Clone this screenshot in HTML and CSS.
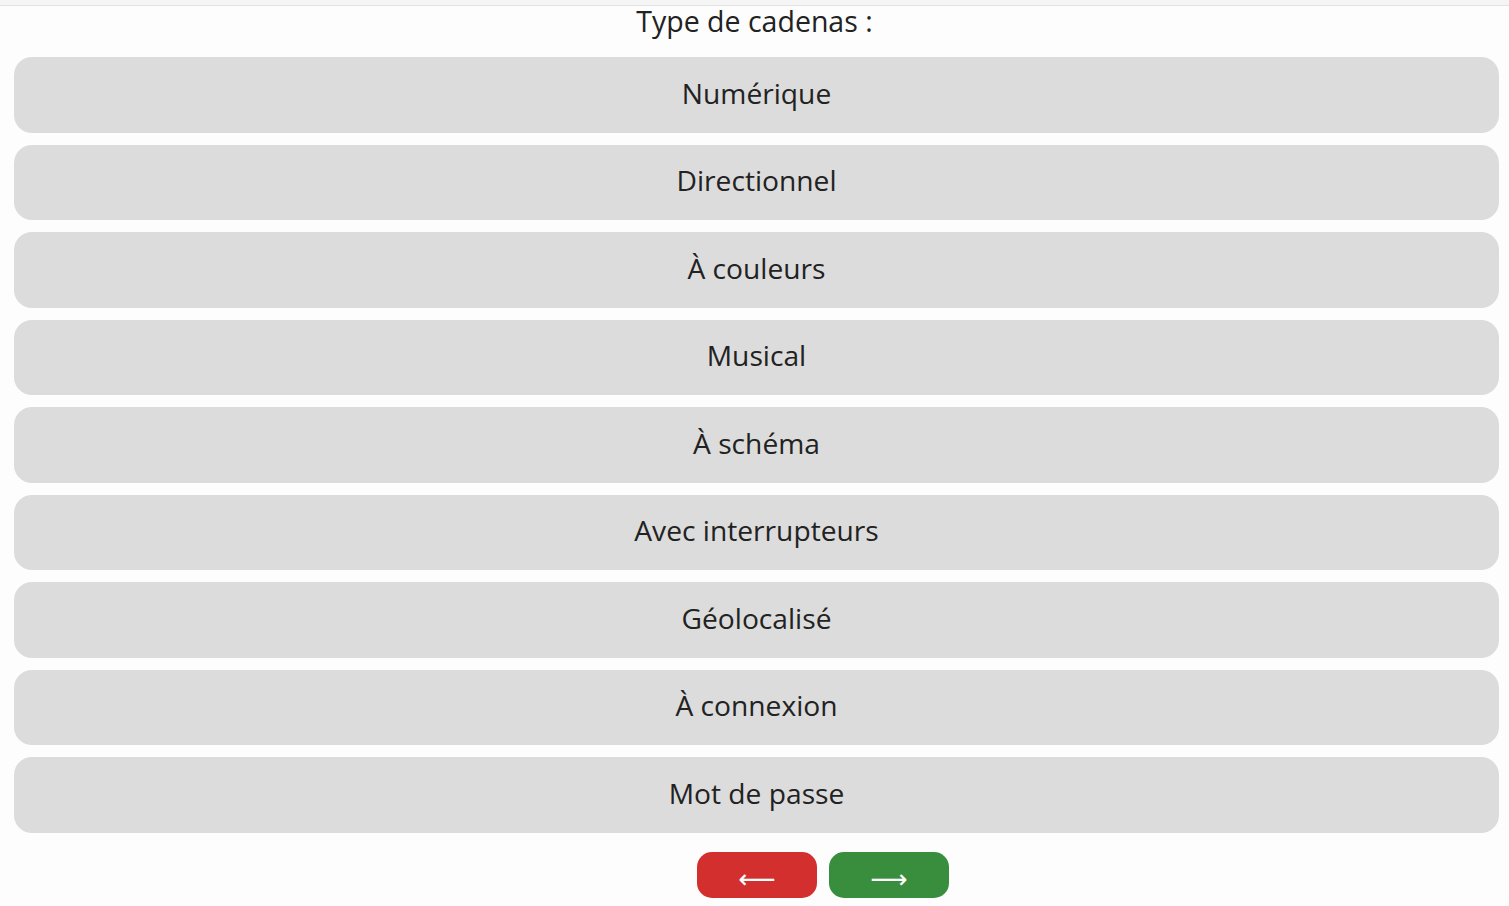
FILE: index.html
```html
<!DOCTYPE html>
<html lang="fr">
<head>
<meta charset="utf-8">
<title>Type de cadenas</title>
<link rel="stylesheet" href="styles.css">
</head>
<body>
<div class="topbar"></div>
<main class="page">
  <h1 class="title">Type de cadenas :</h1>
  <div class="options">
    <button class="option">Numérique</button>
    <button class="option">Directionnel</button>
    <button class="option">À couleurs</button>
    <button class="option">Musical</button>
    <button class="option">À schéma</button>
    <button class="option">Avec interrupteurs</button>
    <button class="option">Géolocalisé</button>
    <button class="option">À connexion</button>
    <button class="option">Mot de passe</button>
  </div>
  <nav class="nav">
    <button class="nav-btn prev">&#x27F5;</button>
    <button class="nav-btn next">&#x27F6;</button>
  </nav>
</main>
</body>
</html>
```
FILE: styles.css
```css
html, body {
  margin: 0;
  padding: 0;
  background: #fdfdfd;
  font-family: "Open Sans", "Liberation Sans", sans-serif;
  color: #222;
}
.topbar {
  height: 5px;
  background: #f5f5f5;
  border-bottom: 1px solid #e2e2e2;
}
.page {
  display: flex;
  flex-direction: column;
  align-items: stretch;
}
.title {
  margin: 0;
  height: 51px;
  font-size: 28.5px;
  font-weight: 400;
  line-height: 30px;
  text-align: center;
  color: #222;
}
.options {
  display: flex;
  flex-direction: column;
  gap: 12px;
  padding: 0 10px 0 14px;
}
.option {
  height: 75.5px;
  border: none;
  border-radius: 18px;
  background: #dcdcdc;
  font-family: inherit;
  font-size: 28.2px;
  color: #222;
  text-align: center;
  padding: 0 0 4px 0;
}
.nav {
  display: flex;
  justify-content: center;
  gap: 12px;
  padding: 19.5px 0 0 137px;
}
.nav-btn {
  width: 120px;
  height: 46px;
  border: none;
  border-radius: 15px;
  color: #fff;
  font-size: 26px;
  line-height: 46px;
  padding: 4px 0 0 0;
  font-family: "DejaVu Sans", sans-serif;
}
.prev { background: #d32f2f; }
.next { background: #388e3c; }
```
